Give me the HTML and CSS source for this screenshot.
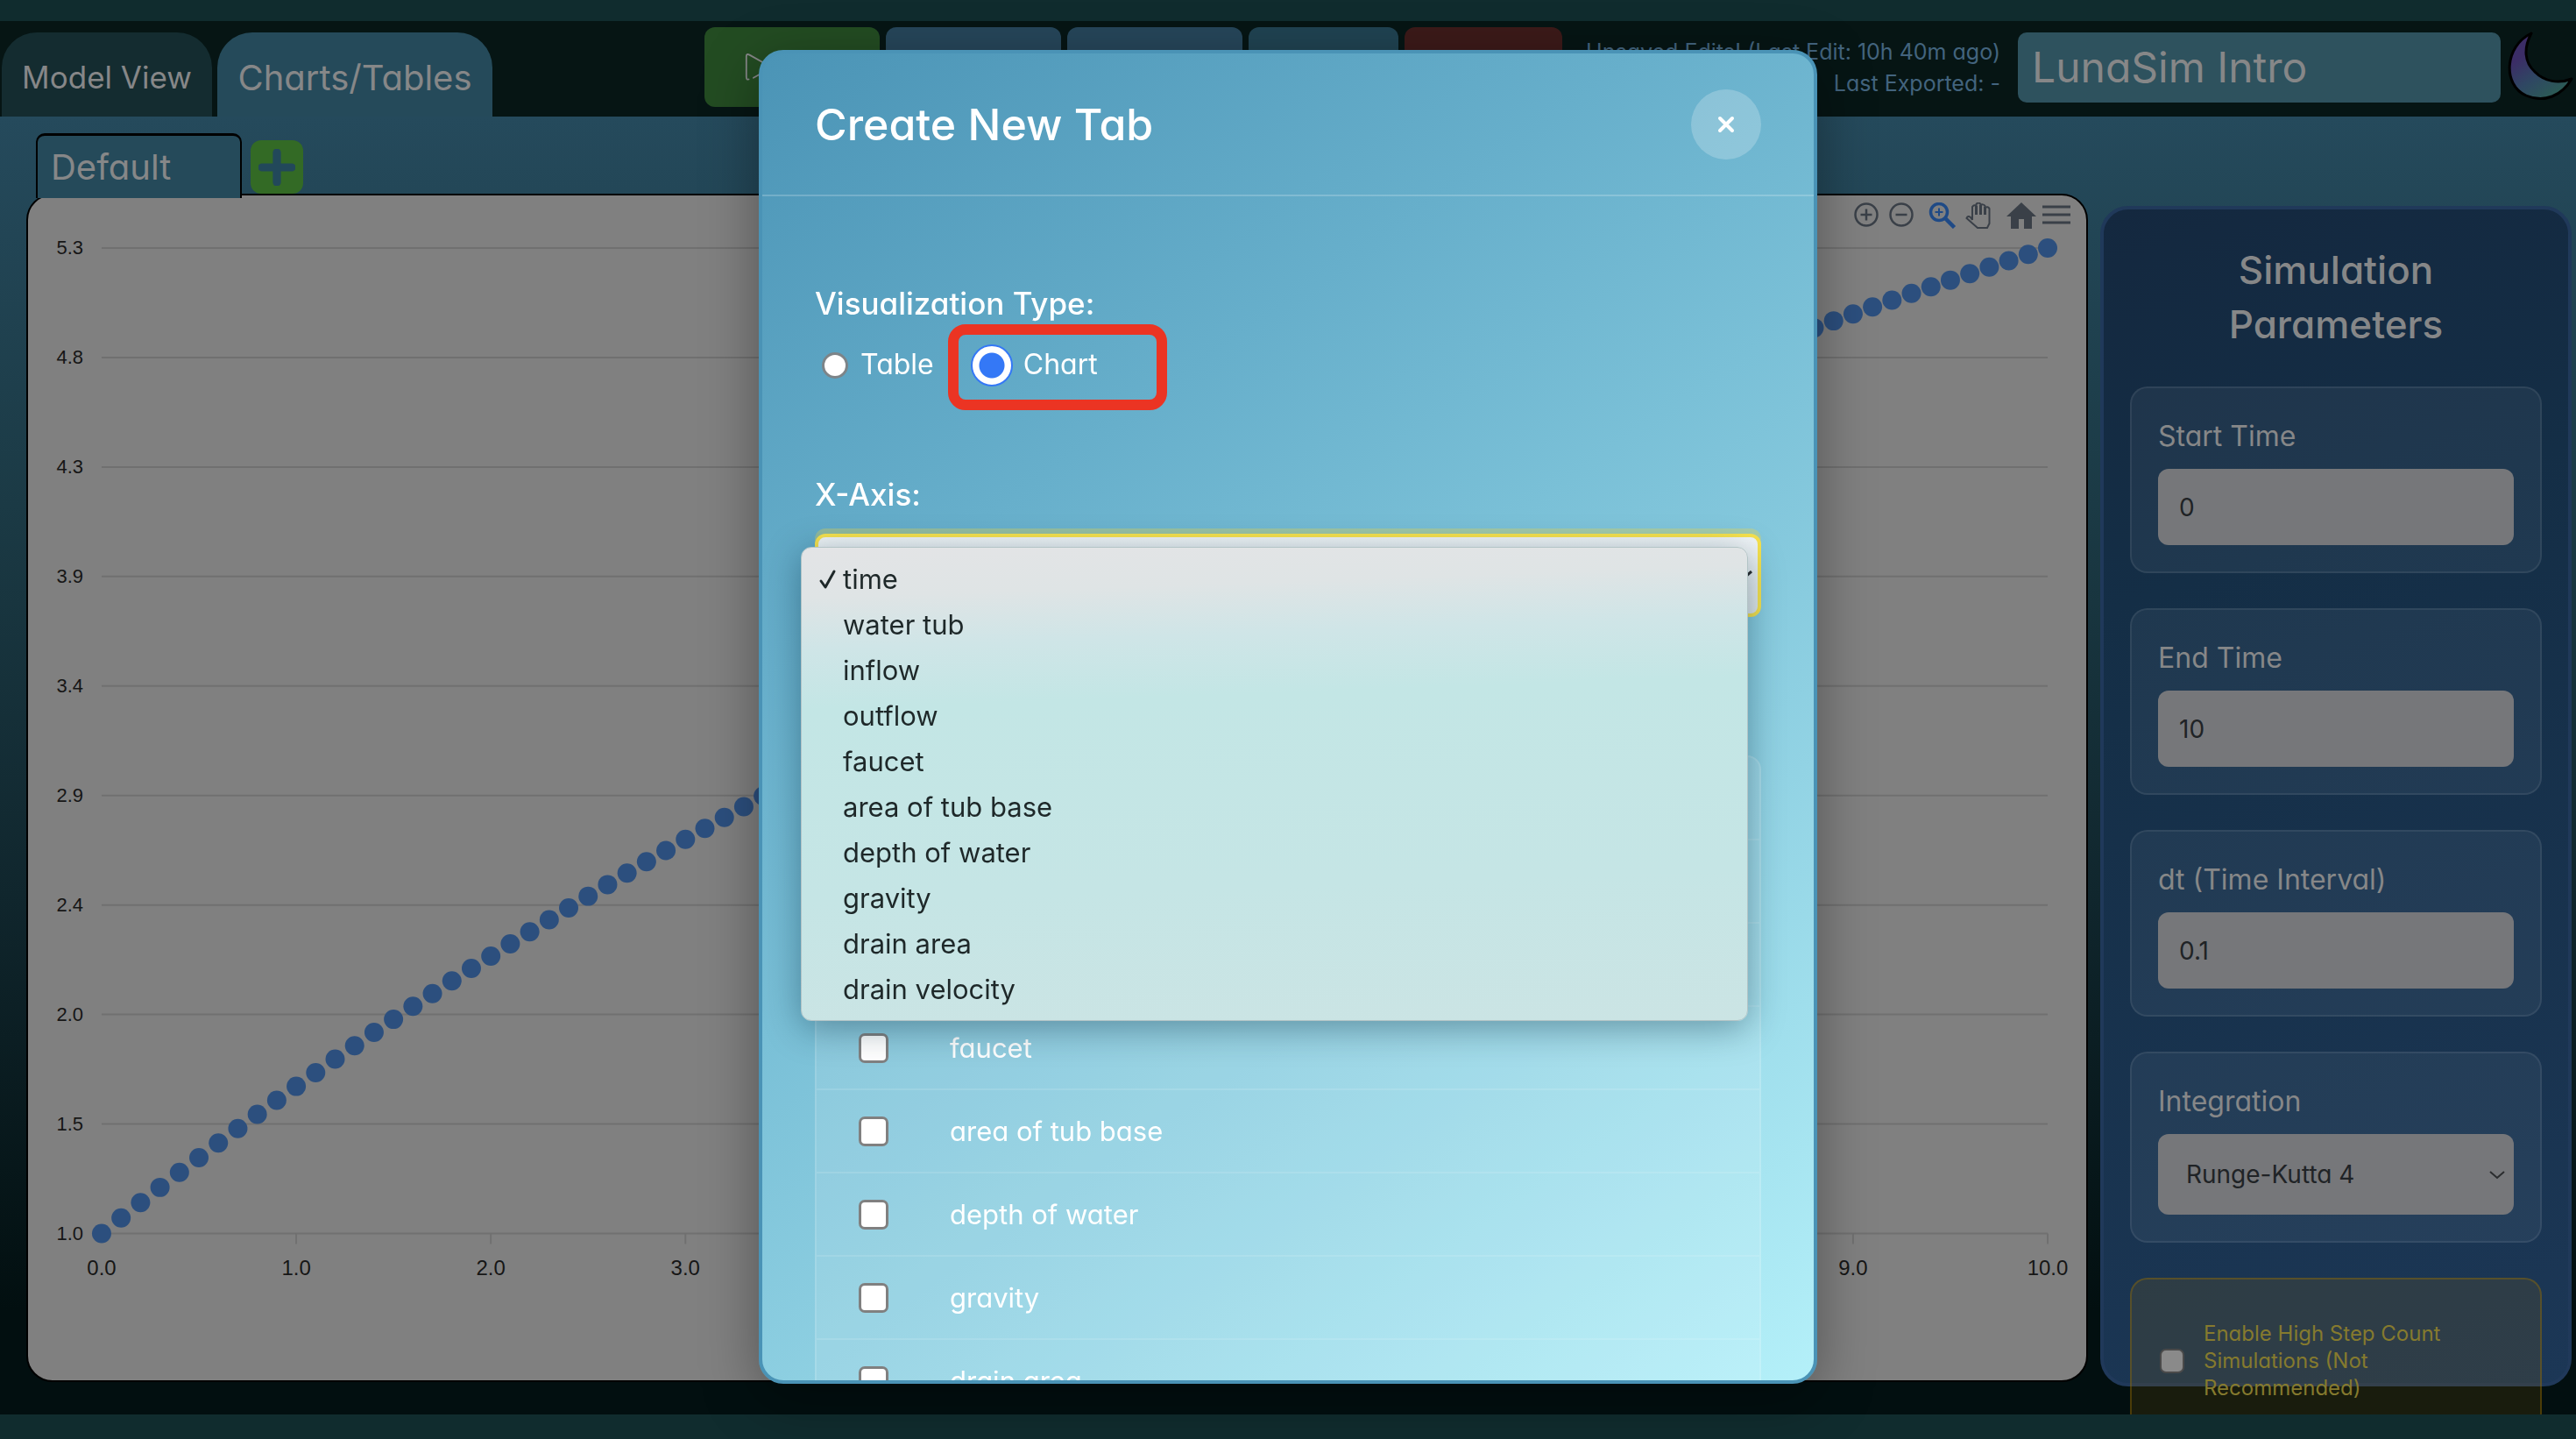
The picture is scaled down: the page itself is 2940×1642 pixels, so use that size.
FILE: index.html
```html
<!DOCTYPE html>
<html lang="en">
<head>
<meta charset="utf-8">
<meta name="viewport" content="width=device-width, initial-scale=1">
<title>LunaSim</title>
<link rel="stylesheet" href="styles.css">
</head>
<body>
<div class="app">
  <header class="topbar">
    <nav class="views">
      <button class="view" type="button">Model View</button>
      <button class="view view-active" type="button">Charts/Tables</button>
    </nav>
    <div class="actions">
      <button class="action action-run" type="button" aria-label="Run">
        <svg viewBox="0 0 40 40" fill="none" stroke="currentColor" stroke-width="2" stroke-linecap="round" stroke-linejoin="round"><path d="M5 35 Q2 36 2 32 V6 Q2 2 6 4 L31 18 Q34 20 31 22 L11 33"/></svg>
      </button>
      <button class="action action-blue" type="button" aria-label="File"></button>
      <button class="action action-blue" type="button" aria-label="Export"></button>
      <button class="action action-teal" type="button" aria-label="Settings"></button>
      <button class="action action-red" type="button" aria-label="Clear"></button>
    </div>
    <div class="status">
      <p>Unsaved Edits! (Last Edit: 10h 40m ago)</p>
      <p>Last Exported: -</p>
    </div>
    <input class="model-name" type="text" value="LunaSim Intro" aria-label="Model name">
    <svg class="moon" viewBox="0 0 76 80" aria-hidden="true">
      <defs><linearGradient id="moonFill" x1="0.2" y1="0.1" x2="0.8" y2="1"><stop offset="0.2" stop-color="#3b2d66"/><stop offset="0.55" stop-color="#2f4763"/><stop offset="1" stop-color="#2b5f52"/></linearGradient></defs>
      <path d="M27 3 C-4 18 -6 62 21 74 C42 83 62 74 73 55 C58 61 42 58 31 47 C19 36 18 20 27 3 Z" fill="url(#moonFill)" stroke="#000" stroke-width="3" stroke-linejoin="round"/>
    </svg>
  </header>

  <main class="workspace">
    <section class="charts">
      <div class="chart-tabs">
        <button class="chart-tab" type="button">Default</button>
        <button class="add-tab" type="button" aria-label="Add tab"><svg viewBox="0 0 41 41"><path d="M20.500 4V37M4 20.500H37" stroke="currentColor" stroke-width="9" stroke-linecap="round"/></svg></button>
      </div>
      <div class="chart-panel">
        <div class="chart-tools">
          <svg viewBox="0 0 28 28" fill="none" stroke="currentColor" stroke-width="2.500"><circle cx="14" cy="14" r="12.500"/><path d="M14 7.500V20.500M7.500 14H20.500"/></svg>
          <svg class="tool-minus" viewBox="0 0 28 28" fill="none" stroke="currentColor" stroke-width="2.500"><circle cx="14" cy="14" r="12.500"/><path d="M7.500 14H20.500"/></svg>
          <svg class="tool-zoom" viewBox="0 0 32 30" fill="none" stroke="currentColor" stroke-width="3.500"><circle cx="12" cy="11" r="9.500"/><path d="M18.500 17.500L29.500 28.500" stroke-width="4.500"/><path d="M12 6.500V15.500M7.500 11H16.500" stroke-width="2"/></svg>
          <svg class="tool-hand" viewBox="0 0 30 30" fill="none" stroke="currentColor" stroke-width="2"><path d="M8 20V5Q10 2 12.500 4V2Q15 -1 17.500 2V3.500Q20 1 22.500 4V6Q26 4 27.500 7V24L25 29H14L1.500 18Q3 14.500 6 17L8 20"/><path d="M12.500 4V14M17.500 3V14M22.500 5V14" stroke-width="3"/></svg>
          <svg class="tool-home" viewBox="0 0 34 30" fill="currentColor"><path d="M17 0L34 16H29V30H20V19H14V30H5V16H0Z"/></svg>
          <svg class="tool-menu" viewBox="0 0 32 28" fill="none" stroke="currentColor" stroke-width="3"><path d="M0 5H32M0 14H32M0 23H32"/></svg>
        </div>
        <svg class="chart" viewBox="32 265 2350 1310" role="img" aria-label="Scatter chart over time">
          <g class="grid"></g>
          <g class="y-labels"></g>
          <g class="x-labels"></g>
          <g class="points"></g>
        </svg>
      </div>
    </section>

    <aside class="params">
      <h2>Simulation Parameters</h2>
      <div class="param">
        <label for="start">Start Time</label>
        <input id="start" type="text" value="0">
      </div>
      <div class="param">
        <label for="end">End Time</label>
        <input id="end" type="text" value="10">
      </div>
      <div class="param">
        <label for="dt">dt (Time Interval)</label>
        <input id="dt" type="text" value="0.1">
      </div>
      <div class="param">
        <label for="integration">Integration</label>
        <div class="select-wrap">
          <select id="integration"><option>Runge-Kutta 4</option></select>
          <svg class="chevron" viewBox="0 0 18 10" fill="none" stroke="currentColor" stroke-width="2"><path d="M1 1L9 8L17 1"/></svg>
        </div>
      </div>
      <div class="param param-warning">
        <input id="highstep" class="tick" type="checkbox">
        <label for="highstep">Enable High Step Count Simulations (Not Recommended)</label>
      </div>
    </aside>
  </main>
</div>

<div class="modal-layer">
  <div class="dialog" role="dialog" aria-labelledby="dialog-title">
    <div class="dialog-head">
      <h1 id="dialog-title">Create New Tab</h1>
      <button class="close" type="button" aria-label="Close"><svg viewBox="0 0 20 20" stroke="currentColor" stroke-width="4" stroke-linecap="round"><path d="M3 3L17 17M17 3L3 17"/></svg></button>
    </div>
    <form class="dialog-body">
      <p class="field-title" id="type-title">Visualization Type:</p>
      <div class="types" role="radiogroup" aria-labelledby="type-title">
        <label class="type"><input class="radio" type="radio" name="type"><span>Table</span></label>
        <label class="type type-marked"><input class="radio radio-big" type="radio" name="type" checked><span>Chart</span></label>
      </div>
      <label class="field-title" for="xaxis">X-Axis:</label>
      <div class="xaxis-wrap">
        <select id="xaxis" class="xaxis"><option value="time" label=" "></option></select>
        <svg class="chevron" viewBox="0 0 18 10" fill="none" stroke="currentColor" stroke-width="3"><path d="M1 1L9 8L17 1"/></svg>
        <ul class="menu" role="listbox" aria-label="X-Axis">
          <li role="option" aria-selected="true"><svg class="check" viewBox="0 0 22 24" fill="none" stroke="currentColor" stroke-width="3" stroke-linecap="round" stroke-linejoin="round"><path d="M3 14L8 21L18 3"/></svg>time</li>
          <li role="option">water tub</li>
          <li role="option">inflow</li>
          <li role="option">outflow</li>
          <li role="option">faucet</li>
          <li role="option">area of tub base</li>
          <li role="option">depth of water</li>
          <li role="option">gravity</li>
          <li role="option">drain area</li>
          <li role="option">drain velocity</li>
        </ul>
      </div>
      <div class="series">
        <label><input class="tick" type="checkbox" aria-label="water tub"></label>
        <label><input class="tick" type="checkbox" aria-label="inflow"></label>
        <label><input class="tick" type="checkbox" aria-label="outflow"></label>
        <label><input class="tick" type="checkbox">faucet</label>
        <label><input class="tick" type="checkbox">area of tub base</label>
        <label><input class="tick" type="checkbox">depth of water</label>
        <label><input class="tick" type="checkbox">gravity</label>
        <label><input class="tick" type="checkbox">drain area</label>
      </div>
    </form>
  </div>
</div>
<script src="chart.js"></script>
</body>
</html>
```
FILE: chart.js
```js
const NS = 'http://www.w3.org/2000/svg';
const LEFT = 116, RIGHT = 2338, TOP = 283, BOTTOM = 1408;

function add(parent, name, attrs, text) {
  const node = document.createElementNS(NS, name);
  for (const key in attrs) node.setAttribute(key, attrs[key]);
  if (text) node.textContent = text;
  document.querySelector(parent).appendChild(node);
}

const px = t => LEFT + (RIGHT - LEFT) * t / 10;

// Height of the curve above the baseline at time t
const rise = t => 178.2 * t - 10.63 * t * t + 0.406 * t ** 3
  - 0.0255 * t * (t - 1) * (t - 3) * (t - 10);

['5.3', '4.8', '4.3', '3.9', '3.4', '2.9', '2.4', '2.0', '1.5', '1.0'].forEach((label, i) => {
  const y = TOP + 125 * i;
  add('.grid', 'path', { d: `M${LEFT} ${y}H${RIGHT}` });
  add('.y-labels', 'text', { x: 95, y: y + 7 }, label);
});

for (let t = 0; t <= 10; t++) {
  if (t > 3 && t < 9) continue;
  if (t > 0) add('.grid', 'path', { d: `M${px(t)} ${BOTTOM}v12` });
  add('.x-labels', 'text', { x: px(t), y: 1456 }, t.toFixed(1));
}

for (let i = 0; i <= 100; i++) {
  const t = i / 10;
  add('.points', 'circle', { cx: px(t), cy: BOTTOM - rise(t), r: 11 });
}
```
FILE: styles.css
```css
* { box-sizing: border-box; }

body {
  margin: 0;
  padding: 24px 0 28px;
  height: 100vh;
  overflow: hidden;
  background: #102c2e;
  color: #868788;
  font-family: Inter, "Liberation Sans", sans-serif;
  font-feature-settings: "cv11";
}

h1, h2, p, ul { margin: 0; padding: 0; font-weight: 400; }
button, input, select {
  font: inherit;
  font-feature-settings: inherit;
  color: inherit;
  border: 0;
  margin: 0;
}
svg { display: block; flex: none; }

.app { height: 100%; display: flex; flex-direction: column; overflow: hidden; }

/* Top bar */
.topbar {
  display: flex;
  align-items: center;
  height: 109px;
  flex: none;
  padding: 0 2px;
  background: #061514;
}
.views { display: flex; gap: 6px; align-self: flex-end; margin-right: auto; }
.view {
  height: 96px;
  width: 240px;
  padding: 6px 0 0;
  border-radius: 40px 40px 0 0;
  background: #142c30;
  font-size: 35px;
  white-space: nowrap;
}
.view-active { width: 314px; background: #254a5a; font-size: 40px; }
.actions { display: flex; gap: 7px; margin-bottom: 4px; }
.action { width: 200px; height: 91px; border-radius: 12px; }
.action-run { padding: 0 46px; background: #234c22; }
.action-run svg { width: 36px; height: 36px; }
.action-blue { background: #26465a; }
.action-teal { width: 171px; background: #204352; }
.action-red { width: 180px; background: #3c1a19; }
.status {
  width: 500px;
  margin-bottom: 4px;
  text-align: right;
  white-space: nowrap;
  font-size: 25px;
  line-height: 36px;
  color: #43647e;
}
.model-name {
  width: 551px;
  height: 80px;
  margin: 0 8px 4px 20px;
  padding: 0 16px;
  border-radius: 10px;
  background: #2e525e;
  font-size: 48px;
}
.moon { width: 76px; height: 80px; margin-bottom: 8px; }

/* Workspace */
.workspace {
  flex: 1;
  min-height: 0;
  display: grid;
  grid-template-columns: 1fr 538px;
  grid-template-rows: minmax(0, 1fr);
  gap: 14px;
  padding: 0 5px 37px 30px;
  background: linear-gradient(#254a5c, #1b3a45 30%, #10262d 60%, #020f10 92%);
}
.charts { display: flex; flex-direction: column; min-width: 0; padding-top: 19px; }
.chart-tabs { display: flex; align-items: flex-end; gap: 10px; height: 69px; padding-left: 11px; }
.chart-tab {
  position: relative;
  z-index: 1;
  width: 235px;
  height: 74px;
  margin-bottom: -5px;
  padding: 0 0 0 15px;
  border: solid #000;
  border-width: 3px 2px 0;
  border-radius: 10px 10px 0 0;
  background: #254a5a;
  font-size: 40px;
  text-align: left;
}
.add-tab { width: 60px; height: 61px; padding: 9px; border-radius: 12px; background: #336a25; color: #22485a; }
.chart-panel {
  flex: 1;
  min-height: 0;
  border: 2px solid #000;
  border-radius: 30px;
  background: #808080;
  overflow: hidden;
}
.chart-tools { display: flex; justify-content: flex-end; height: 42px; padding: 8px 18px 0 0; color: #3a4048; }
.chart-tools svg { width: 28px; height: 28px; }
.chart-tools .tool-minus { margin: 0 17px 0 12px; }
.chart-tools .tool-zoom { width: 32px; height: 30px; color: #1f4a86; }
.chart-tools .tool-hand { width: 30px; height: 30px; margin: 0 17px 0 10px; }
.chart-tools .tool-home { width: 34px; height: 30px; margin-right: 7px; }
.chart-tools .tool-menu { width: 32px; }
.chart { width: 100%; font-family: "Liberation Sans", sans-serif; fill: #161616; }
.grid { stroke: #707070; stroke-width: 2; }
.y-labels { font-size: 22px; text-anchor: end; }
.x-labels { font-size: 24px; text-anchor: middle; }
.points { fill: #2c4f7e; }

/* Simulation parameters */
.params {
  display: flex;
  flex-direction: column;
  gap: 40px;
  margin: 102px 0 -5px;
  padding: 38px 30px 0;
  border: 4px solid #20395a;
  border-radius: 32px;
  background: linear-gradient(160deg, #14283f, #142e46 30%, #1c3756);
}
.params h2 {
  padding: 0 80px;
  font-size: 44px;
  font-weight: 500;
  line-height: 62px;
  text-align: center;
}
.param {
  flex: none;
  padding: 30px;
  border: 2px solid rgba(255, 255, 255, 0.07);
  border-radius: 20px;
  background: rgba(255, 255, 255, 0.05);
}
.param label { display: block; margin-bottom: 12px; font-size: 32px; line-height: 50px; }
.param input[type="text"], .param select {
  display: block;
  width: 100%;
  height: 87px;
  padding: 0 24px;
  border-radius: 12px;
  background: #76777a;
  color: #202326;
  font-size: 28px;
}
.param select { height: 92px; padding: 0 32px; appearance: none; }
.select-wrap { position: relative; }
.chevron { position: absolute; right: 10px; top: 42px; width: 18px; height: 10px; color: #2a2c2e; }
.param.param-warning {
  display: flex;
  align-items: center;
  gap: 22px;
  padding: 46px 60px 46px 32px;
  border-color: rgba(150, 110, 0, 0.4);
  background: rgba(160, 108, 0, 0.15);
}
.param-warning label { margin: 0; font-size: 24px; line-height: 31px; color: #857a2e; }
.tick {
  flex: none;
  width: 34px;
  height: 34px;
  appearance: none;
  border: 3px solid #808080;
  border-radius: 7px;
  background: #fff;
}
.param-warning .tick { width: 28px; height: 28px; border: 2px solid #4a4a4a; background: #8a8a8a; }

/* Dialog */
.modal-layer {
  position: fixed;
  inset: 0;
  display: flex;
  justify-content: center;
  padding: 57px 0 63px;
}
.dialog {
  width: min(1208px, 100%);
  display: flex;
  flex-direction: column;
  overflow: hidden;
  border: 4px solid #4a93b6;
  border-radius: 28px;
  background: linear-gradient(145deg, #4b94b6, #67afcb 30%, #7ac0d7 48%, #92d3e4 70%, #b4f0f9);
  box-shadow: 0 16px 64px rgba(0, 0, 0, 0.35);
  color: #fff;
}
.dialog-head {
  display: flex;
  align-items: center;
  justify-content: space-between;
  flex: none;
  height: 163px;
  padding: 0 60px;
  border-bottom: 2px solid rgba(255, 255, 255, 0.2);
}
.dialog-head h1 { font-size: 50px; font-weight: 500; line-height: 64px; }
.close {
  display: grid;
  place-items: center;
  width: 80px;
  height: 80px;
  border-radius: 50%;
  background: rgba(255, 255, 255, 0.22);
}
.close svg { width: 20px; height: 20px; }
.dialog-body { padding: 96px 60px 0; }
.field-title { display: block; font-size: 35px; line-height: 52px; font-weight: 500; }
.types { display: flex; gap: 16px; height: 98px; margin: -2px 0 70px; align-items: center; }
.type { display: flex; align-items: center; gap: 14px; height: 98px; padding: 0 0 4px 8px; font-size: 32px; }
.type span { padding-bottom: 4px; }
.type-marked {
  width: 250px;
  padding-left: 14px;
  border: 12px solid #eb3423;
  border-radius: 20px;
  gap: 12px;
}
.radio {
  width: 30px;
  height: 30px;
  appearance: none;
  border: 3px solid #7d8488;
  border-radius: 50%;
  background: #fff;
}
.radio-big {
  width: 48px;
  height: 48px;
  border: 2px solid #3478f6;
  background: radial-gradient(circle, #3478f6 14px, #fff 15px);
}
.xaxis-wrap { position: relative; margin-top: 19px; }
.xaxis {
  display: block;
  width: 100%;
  height: 95px;
  appearance: none;
  border: 4px solid #f7e24d;
  border-radius: 12px;
  background: linear-gradient(#f0f5f8, #dfe6e9);
  box-shadow: 0 -6px 0 rgba(250, 220, 60, 0.3);
}
.menu {
  position: absolute;
  left: -16px;
  right: 15px;
  top: 15px;
  z-index: 2;
  padding: 10px 0 9px;
  list-style: none;
  border: 1px solid #b3c4c6;
  border-radius: 12px;
  background: linear-gradient(178deg, #e3e4e6, #dfe4e5 10%, #cfe5e7 20%, #c3e6e5 32%, #c5e5e5 70%, #cbe4e4);
  box-shadow: 0 8px 40px rgba(0, 40, 60, 0.4);
  color: #1e2829;
  font-feature-settings: normal;
}
.menu li { position: relative; padding-left: 47px; font-size: 31px; line-height: 52px; }
.check { position: absolute; left: 19px; top: 14px; width: 22px; height: 24px; }
.series {
  margin-top: 158px;
  border: 2px solid rgba(255, 255, 255, 0.12);
  border-radius: 16px;
  background: rgba(255, 255, 255, 0.12);
}
.series label {
  display: flex;
  align-items: center;
  gap: 70px;
  height: 95px;
  padding-left: 48px;
  border-bottom: 2px solid rgba(255, 255, 255, 0.12);
  font-size: 31px;
}
```
